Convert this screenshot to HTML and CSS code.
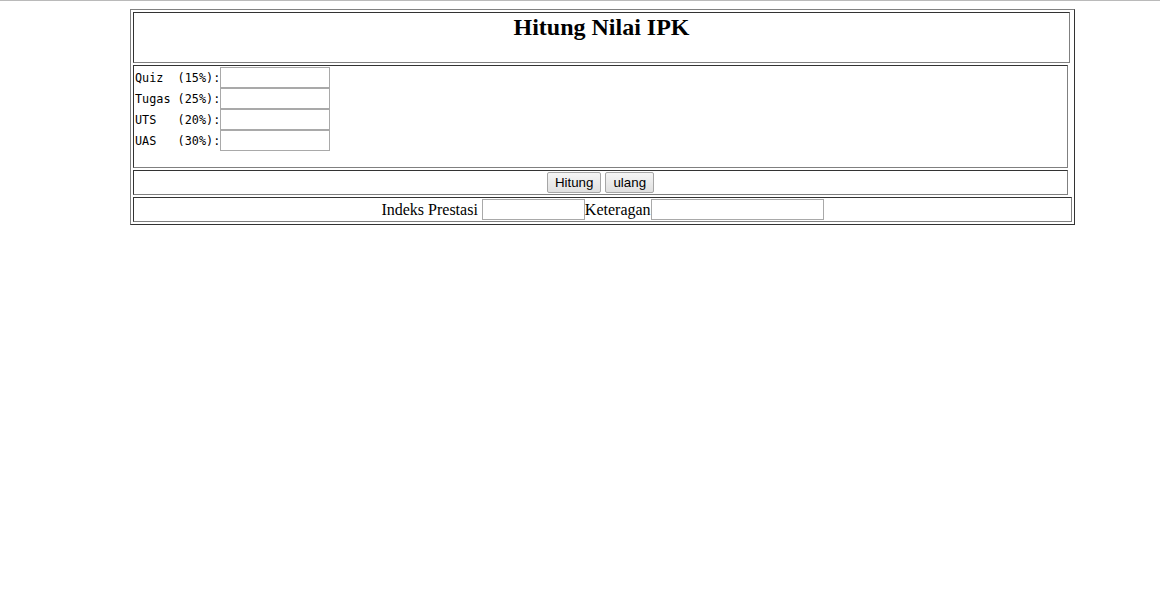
FILE: index.html
```html
<!DOCTYPE html>
<html lang="id">
<head>
    <meta charset="UTF-8">
    <title>Hitung Nilai IPK</title>
    <link rel="stylesheet" href="styles.css">
</head>
<body>

<div class="page">
    <form class="panel" name="ipk">
        <div class="cell cell-title">
            <h2>Hitung Nilai IPK</h2>
        </div>

        <div class="cell cell-nilai">
            <div class="field"><span class="label">Quiz  (15%):</span><input type="text" name="quiz"></div>
            <div class="field"><span class="label">Tugas (25%):</span><input type="text" name="tugas"></div>
            <div class="field"><span class="label">UTS   (20%):</span><input type="text" name="uts"></div>
            <div class="field"><span class="label">UAS   (30%):</span><input type="text" name="uas"></div>
        </div>

        <div class="cell cell-tombol">
            <button type="button" onclick="hitung()">Hitung</button>
            <button type="reset">ulang</button>
        </div>

        <div class="cell cell-hasil">
            <span class="text gap">Indeks Prestasi</span>
            <input type="text" name="ip" class="ip">
            <span class="text">Keteragan</span>
            <input type="text" name="ket" class="ket">
        </div>
    </form>
</div>

<script>
function hitung() {
    var f = document.forms.ipk;
    var nilai = (parseFloat(f.quiz.value) || 0) * 0.15
              + (parseFloat(f.tugas.value) || 0) * 0.25
              + (parseFloat(f.uts.value) || 0) * 0.20
              + (parseFloat(f.uas.value) || 0) * 0.30;

    f.ip.value = nilai.toFixed(2);
    f.ket.value = nilai >= 60 ? 'Lulus' : 'Tidak Lulus';
}
</script>

</body>
</html>
```

FILE: styles.css
```css
/* Basic reset */
html, body {
    margin: 0;
    padding: 0;
}

body {
    font-family: "Liberation Serif", "Times New Roman", serif;
    font-size: 16px;
    color: #000;
    background: #fff;
}

.page {
    border-top: 1px solid #bababa;
    padding: 8px 0 0 130px;
}

/* outer table look */
.panel {
    width: 945px;
    box-sizing: border-box;
    border: 1px solid;
    border-color: #808080 #333 #333 #808080;
    padding: 2px;
    display: flex;
    flex-direction: column;
    align-items: flex-start;
    gap: 2px;
}

.cell {
    box-sizing: border-box;
    border: 1px solid;
    border-color: #333 #808080 #808080 #333;
    padding: 1px;
}

.cell-title {
    width: 937px;
    height: 51px;
    text-align: center;
}

.cell-title h2 {
    margin: 0;
    font-size: 24px;
    font-weight: bold;
}

.cell-nilai {
    width: 935px;
    height: 103px;
}

.field {
    display: flex;
    align-items: center;
    height: 21px;
}

.label {
    white-space: pre;
    font-family: "DejaVu Sans Mono", "Liberation Mono", monospace;
    font-size: 11.8px;
}

input[type="text"] {
    box-sizing: border-box;
    height: 21px;
    margin: 0;
    padding: 0 2px;
    border: 1px solid #a9a9a9;
    background: #fff;
    font: 13px Arial, "Liberation Sans", sans-serif;
}

.field input {
    width: 110px;
}

.cell-tombol {
    width: 935px;
    height: 25px;
    display: flex;
    justify-content: center;
    gap: 4px;
}

button {
    height: 21px;
    margin: 0;
    padding: 0 7px;
    border: 1px solid #a6a6a6;
    border-radius: 2px;
    background: linear-gradient(#f5f5f5, #e0e0e0);
    font: 13.33px "Liberation Sans", Arial, sans-serif;
    color: #000;
}

.cell-hasil {
    width: 939px;
    height: 25px;
    display: flex;
    justify-content: center;
    align-items: center;
}

.gap {
    margin-right: 4px;
}

.ip {
    width: 103px;
}

.ket {
    width: 173px;
}
```
